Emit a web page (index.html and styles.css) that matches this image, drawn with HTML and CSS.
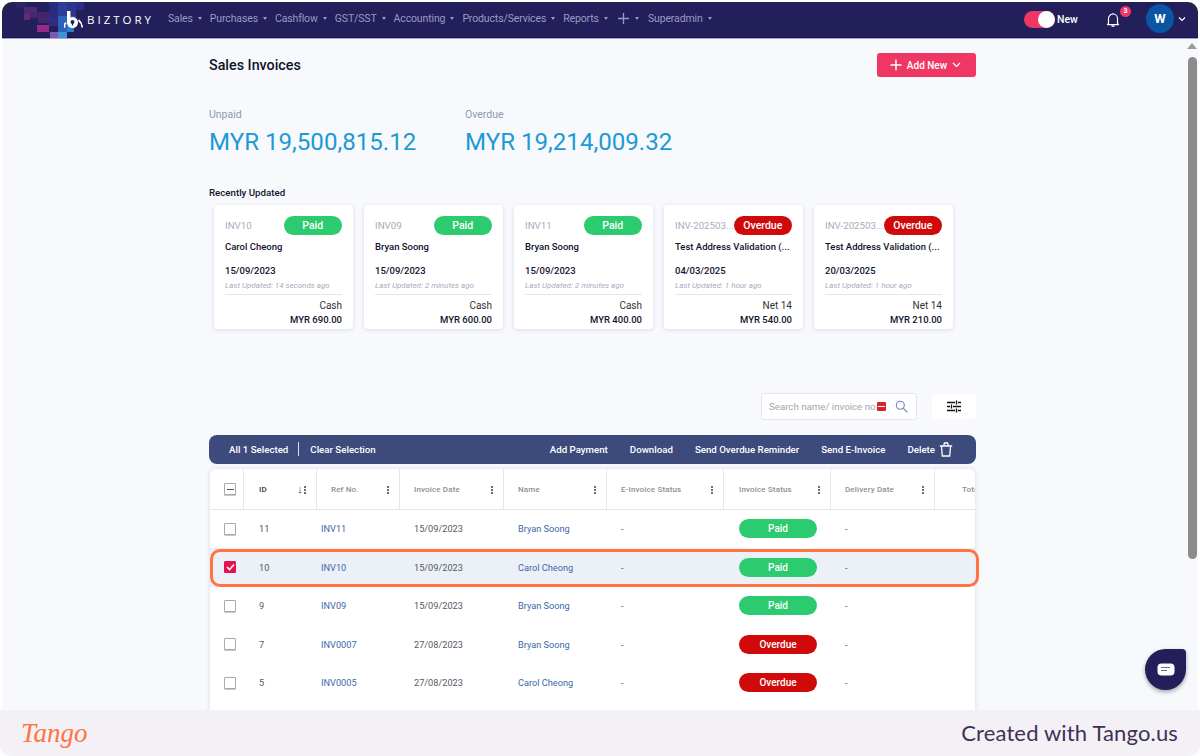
FILE: index.html
```html
<!DOCTYPE html>
<html lang="en">
<head>
<meta charset="utf-8">
<title>Sales Invoices</title>
<link rel="stylesheet" href="styles.css">
</head>
<body>
<div class="frame">
  <div class="shot">
    <header class="nav">
      <svg class="mosaic" width="90" height="36" viewBox="0 0 90 36" aria-hidden="true">
        <rect x="14" y="0" width="10" height="6" fill="#2a2364"/>
        <rect x="22" y="5" width="13" height="7" fill="#4f2a72"/>
        <rect x="22" y="12" width="6" height="6" fill="#632a78"/>
        <rect x="28" y="11" width="8" height="5" fill="#43266c"/>
        <rect x="36" y="10" width="11" height="11" fill="#42256c"/>
        <rect x="35" y="23" width="12" height="7" fill="#962a88"/>
        <rect x="47" y="0" width="9" height="16" fill="#2c2a7c"/>
        <rect x="47" y="16" width="9" height="8" fill="#362a80"/>
        <rect x="47" y="24" width="8" height="6" fill="#231f5a"/>
        <rect x="56" y="0" width="9" height="14" fill="#2b3f98"/>
        <rect x="65" y="0" width="9" height="14" fill="#2c3590"/>
        <rect x="74" y="0" width="8" height="8" fill="#2b2e84"/>
        <rect x="56" y="14" width="9" height="16" fill="#2a62bc"/>
        <rect x="65" y="14" width="9" height="10" fill="#2c52ac"/>
        <rect x="65" y="24" width="7" height="6" fill="#2f7cca"/>
        <rect x="48" y="30" width="8" height="6" fill="#7a58b0"/>
        <rect x="56" y="30" width="9" height="6" fill="#3a94da"/>
      </svg>
      <a class="brand" href="#">
        <svg class="brand-mark" width="19" height="19" viewBox="0 0 19 19" aria-hidden="true">
          <rect x="3" y="1" width="3.500" height="13" fill="#fff"/>
          <circle cx="8.500" cy="12.500" r="5.500" fill="#fff"/>
          <circle cx="8.500" cy="12" r="2" fill="#231f5a"/>
          <rect x="7.900" y="12" width="1.200" height="3.500" fill="#231f5a"/>
          <path d="M2 12.500C.4 14 .2 16 1 17.500M14.500 10c2 1.500 3.400 4 3.800 7.500" stroke="#fff" stroke-width="1.700" fill="none"/>
        </svg>
        <span class="brand-name">BIZTORY</span>
      </a>
      <nav class="menu">
        <a class="menu-item" href="#">Sales<i class="caret"></i></a>
        <a class="menu-item" href="#">Purchases<i class="caret"></i></a>
        <a class="menu-item" href="#">Cashflow<i class="caret"></i></a>
        <a class="menu-item" href="#">GST/SST<i class="caret"></i></a>
        <a class="menu-item" href="#">Accounting<i class="caret"></i></a>
        <a class="menu-item" href="#">Products/Services<i class="caret"></i></a>
        <a class="menu-item" href="#">Reports<i class="caret"></i></a>
        <a class="menu-item menu-plus" href="#">
          <svg width="13" height="13" viewBox="0 0 13 13" aria-hidden="true"><path d="M6.500 1v11M1 6.500h11" stroke="#9a9ac2" stroke-width="1.300"/></svg><i class="caret"></i>
        </a>
        <a class="menu-item" href="#">Superadmin<i class="caret"></i></a>
      </nav>
      <div class="nav-right">
        <span class="toggle"><i class="toggle-knob"></i></span>
        <span class="toggle-label">New</span>
        <span class="bell">
          <svg width="14" height="16" viewBox="0 0 14 16" aria-hidden="true"><path d="M2.500 11.500V6.500a4.500 4.500 0 0 1 9 0v5l1 1.200H1.500zM5.500 14.200h3M7 1v1" fill="none" stroke="#fff" stroke-width="1.200" stroke-linejoin="round"/></svg>
          <b class="bell-badge">3</b>
        </span>
        <span class="avatar">W</span>
        <svg class="avatar-chev" width="8" height="6" viewBox="0 0 8 6" aria-hidden="true"><path d="M1 1.500l3 3 3-3" fill="none" stroke="#fff" stroke-width="1.200"/></svg>
      </div>
    </header>

    <div class="body">
      <main class="content">
        <div class="title-row">
          <h1 class="title">Sales Invoices</h1>
          <button class="add-btn">
            <svg width="12" height="12" viewBox="0 0 12 12" aria-hidden="true"><path d="M6 .5v11M.5 6h11" stroke="#fff" stroke-width="1.400"/></svg>
            <span>Add New</span>
            <svg width="9" height="6" viewBox="0 0 9 6" aria-hidden="true"><path d="M1 1l3.500 3.500L8 1" fill="none" stroke="#fff" stroke-width="1.100"/></svg>
          </button>
        </div>

        <section class="stats">
          <div class="stat"><div class="stat-label">Unpaid</div><div class="stat-value">MYR 19,500,815.12</div></div>
          <div class="stat"><div class="stat-label">Overdue</div><div class="stat-value">MYR 19,214,009.32</div></div>
        </section>

        <h2 class="recent-title">Recently Updated</h2>
        <section class="cards">
          <article class="card">
            <div class="card-top"><span class="card-ref">INV10</span><span class="pill paid card-pill">Paid</span></div>
            <div class="card-name">Carol Cheong</div>
            <div class="card-date">15/09/2023</div>
            <div class="card-updated">Last Updated: 14 seconds ago</div>
            <div class="card-term">Cash</div>
            <div class="card-amount">MYR 690.00</div>
          </article>
          <article class="card">
            <div class="card-top"><span class="card-ref">INV09</span><span class="pill paid card-pill">Paid</span></div>
            <div class="card-name">Bryan Soong</div>
            <div class="card-date">15/09/2023</div>
            <div class="card-updated">Last Updated: 2 minutes ago</div>
            <div class="card-term">Cash</div>
            <div class="card-amount">MYR 600.00</div>
          </article>
          <article class="card">
            <div class="card-top"><span class="card-ref">INV11</span><span class="pill paid card-pill">Paid</span></div>
            <div class="card-name">Bryan Soong</div>
            <div class="card-date">15/09/2023</div>
            <div class="card-updated">Last Updated: 2 minutes ago</div>
            <div class="card-term">Cash</div>
            <div class="card-amount">MYR 400.00</div>
          </article>
          <article class="card">
            <div class="card-top"><span class="card-ref">INV-202503...</span><span class="pill overdue card-pill">Overdue</span></div>
            <div class="card-name">Test Address Validation (...</div>
            <div class="card-date">04/03/2025</div>
            <div class="card-updated">Last Updated: 1 hour ago</div>
            <div class="card-term">Net 14</div>
            <div class="card-amount">MYR 540.00</div>
          </article>
          <article class="card">
            <div class="card-top"><span class="card-ref">INV-202503...</span><span class="pill overdue card-pill">Overdue</span></div>
            <div class="card-name">Test Address Validation (...</div>
            <div class="card-date">20/03/2025</div>
            <div class="card-updated">Last Updated: 1 hour ago</div>
            <div class="card-term">Net 14</div>
            <div class="card-amount">MYR 210.00</div>
          </article>
        </section>

        <div class="tools">
          <div class="search">
            <span class="search-text">Search name/ invoice no.</span>
            <i class="ext-icon"></i>
            <svg width="13" height="13" viewBox="0 0 13 13" aria-hidden="true"><circle cx="5.300" cy="5.300" r="4" fill="none" stroke="#7384b0" stroke-width="1.100"/><path d="M8.300 8.300l4 4" stroke="#7384b0" stroke-width="1.200"/></svg>
          </div>
          <button class="filter-btn" aria-label="Filters">
            <svg width="14" height="13" viewBox="0 0 14 13" aria-hidden="true"><path d="M0 2.500h8M11 2.500h3M9.500 .5v4M0 6.500h3M6 6.500h8M4.500 4.500v4M0 10.500h8M11 10.500h3M9.500 8.500v4" stroke="#111" stroke-width="1.300" fill="none"/></svg>
          </button>
        </div>

        <div class="action-bar">
          <span class="action">All 1 Selected</span>
          <i class="action-sep"></i>
          <span class="action">Clear Selection</span>
          <span class="action action-pay">Add Payment</span>
          <span class="action">Download</span>
          <span class="action">Send Overdue Reminder</span>
          <span class="action">Send E-Invoice</span>
          <span class="action action-del">Delete
            <svg width="14" height="15" viewBox="0 0 14 15" aria-hidden="true"><path d="M2.500 4.500l.8 9.500h7.400l.8-9.500M.8 4h12.400M4.800 3.800l.6-2.800h3.200l.6 2.800" fill="none" stroke="#fff" stroke-width="1.300"/></svg>
          </span>
        </div>

        <div class="table">
          <div class="thead">
            <div class="th th-check"><i class="check check-mixed"></i></div>
            <div class="th th-id"><span class="th-strong">ID</span><span class="sort">↓</span><i class="dots"></i></div>
            <div class="th"><span>Ref No.</span><i class="dots"></i></div>
            <div class="th"><span>Invoice Date</span><i class="dots"></i></div>
            <div class="th"><span>Name</span><i class="dots"></i></div>
            <div class="th"><span>E-Invoice Status</span><i class="dots"></i></div>
            <div class="th th-status"><span>Invoice Status</span><i class="dots"></i></div>
            <div class="th"><span>Delivery Date</span><i class="dots"></i></div>
            <div class="th th-total"><span>Total</span></div>
          </div>
          <div class="tr">
            <div class="td td-check"><i class="check"></i></div><div class="td td-id">11</div><div class="td link td-ref">INV11</div><div class="td">15/09/2023</div><div class="td link">Bryan Soong</div><div class="td">-</div><div class="td td-pill"><span class="pill paid">Paid</span></div><div class="td">-</div><div class="td"></div>
          </div>
          <div class="tr tr-selected">
            <div class="td td-check"><i class="check check-on"><svg width="9" height="8" viewBox="0 0 9 8" aria-hidden="true"><path d="M1 4l2.500 2.500L8 1.500" fill="none" stroke="#fff" stroke-width="1.600"/></svg></i></div><div class="td td-id">10</div><div class="td link td-ref">INV10</div><div class="td">15/09/2023</div><div class="td link">Carol Cheong</div><div class="td">-</div><div class="td td-pill"><span class="pill paid">Paid</span></div><div class="td">-</div><div class="td"></div>
          </div>
          <div class="tr">
            <div class="td td-check"><i class="check"></i></div><div class="td td-id">9</div><div class="td link td-ref">INV09</div><div class="td">15/09/2023</div><div class="td link">Bryan Soong</div><div class="td">-</div><div class="td td-pill"><span class="pill paid">Paid</span></div><div class="td">-</div><div class="td"></div>
          </div>
          <div class="tr">
            <div class="td td-check"><i class="check"></i></div><div class="td td-id">7</div><div class="td link td-ref">INV0007</div><div class="td">27/08/2023</div><div class="td link">Bryan Soong</div><div class="td">-</div><div class="td td-pill"><span class="pill overdue">Overdue</span></div><div class="td">-</div><div class="td"></div>
          </div>
          <div class="tr">
            <div class="td td-check"><i class="check"></i></div><div class="td td-id">5</div><div class="td link td-ref">INV0005</div><div class="td">27/08/2023</div><div class="td link">Carol Cheong</div><div class="td">-</div><div class="td td-pill"><span class="pill overdue">Overdue</span></div><div class="td">-</div><div class="td"></div>
          </div>
        </div>
      </main>

      <div class="scrollbar"><i class="scroll-arrow"></i><i class="scroll-thumb"></i></div>

      <button class="chat" aria-label="Chat">
        <svg width="18" height="13" viewBox="0 0 18 13" aria-hidden="true"><rect x=".5" y=".5" width="17" height="12" rx="4" fill="#fff"/><path d="M4 4.500h9M4 7.500h6" stroke="#6e6c94" stroke-width="1"/></svg>
      </button>
    </div>
  </div>
  <footer class="footer">
    <span class="tango">Tango</span>
    <span class="created">Created with Tango.us</span>
  </footer>
</div>
</body>
</html>
```

FILE: styles.css
```css
* { box-sizing: border-box; }
html, body { margin: 0; height: 100%; background: #fff; overflow: hidden; }
body { font-family: Roboto, "Liberation Sans", sans-serif; color: #222; }
i { display: block; font-style: normal; }
a { text-decoration: none; color: inherit; }
button { font-family: inherit; border: 0; padding: 0; }
h1, h2 { margin: 0; }

.frame { width: 1200px; height: 756px; display: flex; flex-direction: column; }
.shot { flex: 1; min-height: 0; margin: 2px 2px 0; display: flex; flex-direction: column; overflow: hidden; border-radius: 10px 10px 0 0; background: #f8f9fd; }

/* nav */
.nav { position: relative; flex: none; height: 36px; background: #231f5a; border-bottom: 1px solid #14105c; box-shadow: 0 1px 0 #a9a9b8; display: flex; align-items: center; z-index: 2; }
.mosaic { position: absolute; left: 0; top: 0; }
.brand { position: relative; display: flex; align-items: center; margin-left: 62px; width: 104px; }
.brand-mark { margin-right: 4px; margin-top: -1px; }
.brand-name { color: #fff; font-family: "Open Sans", sans-serif; font-size: 11.500px; letter-spacing: 3px; font-weight: 500; }
.menu { display: flex; align-items: center; gap: 8px; margin-top: -2px; }
.menu-item { display: flex; align-items: center; color: #9a9ac2; font-size: 10.500px; letter-spacing: -.13px; }
.caret { width: 0; height: 0; margin-left: 5px; border: 2.500px solid transparent; border-top: 3px solid #9a9ac2; border-bottom: 0; }
.menu-plus { margin-left: 1px; margin-right: 1px; }
.nav-right { margin-left: auto; display: flex; align-items: center; }
.toggle { width: 31px; height: 17px; border-radius: 9px; background: #ef3766; position: relative; display: block; }
.toggle-knob { position: absolute; right: 0; top: 0; width: 17px; height: 17px; border-radius: 50%; background: #fff; }
.toggle-label { color: #fff; font-size: 10.500px; font-weight: 500; margin-left: 2px; width: 28px; }
.bell { position: relative; display: block; margin-left: 21px; height: 16px; }
.bell-badge { position: absolute; left: 14px; top: -6px; width: 11px; height: 11px; border-radius: 50%; background: #ef3766; color: #fff; font-size: 7px; line-height: 11px; text-align: center; font-weight: 700; }
.avatar { width: 28px; height: 29px; margin: -3px 0 0 26px; border-radius: 50%; background: #0b55a5; color: #fff; font-weight: 700; font-size: 13px; line-height: 29px; text-align: center; }
.avatar-chev { margin: -2px 12px 0 4px; }

/* body */
.body { flex: 1; min-height: 0; display: flex; position: relative; }
.content { flex: 1; min-width: 0; padding: 15px 210px 0 207px; }
.scrollbar { flex: none; width: 12px; background: #f8f9fd; padding-top: 5px; display: flex; flex-direction: column; align-items: center; }
.scroll-arrow { width: 0; height: 0; border: 5px solid transparent; border-top: 0; border-bottom: 6px solid #9b9b9b; }
.scroll-thumb { width: 9px; height: 502px; margin-top: 8px; background: #8c8c8c; border-radius: 5px; }
.chat { position: absolute; right: 12px; bottom: 20px; width: 41px; height: 41px; background: #231f5a; border-radius: 50% 4px 50% 50%; box-shadow: 0 2px 4px rgba(0,0,0,.35); display: flex; align-items: center; justify-content: center; }

/* title */
.title-row { display: flex; justify-content: space-between; align-items: center; height: 24px; }
.title { font-size: 14.300px; font-weight: 500; color: #10132d; }
.add-btn { width: 99px; height: 24px; padding-right: 2px; background: #ef3766; border-radius: 3px; color: #fff; font-size: 10px; font-weight: 500; display: flex; align-items: center; justify-content: center; gap: 5px; }

/* stats */
.stats { display: flex; margin-top: 31px; }
.stat { width: 256px; }
.stat-label { font-size: 10.500px; line-height: 14px; color: #8a9bb0; }
.stat-value { font-size: 24.100px; line-height: 30px; margin-top: 5px; color: #1c9ad6; }

/* recent */
.recent-title { font-size: 9.700px; line-height: 14px; font-weight: 500; color: #10132d; margin-top: 28.500px; }
.cards { display: flex; gap: 11px; margin: 5.500px 0 0 5px; }
.card { width: 139px; height: 124px; background: #fff; border-radius: 4px; box-shadow: 0 1px 4px rgba(60,70,110,.16); padding: 11px 11px 0; font-size: 9.500px; }
.card-top { display: flex; justify-content: space-between; align-items: center; height: 19px; }
.card-ref { font-size: 9.700px; color: #a6acbc; white-space: nowrap; }
.pill { display: inline-block; border-radius: 10px; color: #fff; font-weight: 500; text-align: center; }
.card-pill { width: 58.500px; flex: none; height: 19px; line-height: 19px; font-size: 10.500px; }
.paid { background: #2ccb70; }
.overdue { background: #d00a0a; }
.card-name { font-weight: 500; color: #10132d; margin-top: 5px; line-height: 14px; white-space: nowrap; }
.card-date { font-weight: 500; color: #10132d; margin-top: 9.500px; line-height: 14px; }
.card-updated { font-size: 8px; font-style: italic; color: #a6acbc; line-height: 11px; margin-top: 2.500px; padding-bottom: 3px; border-bottom: 1px solid #e4e6ee; }
.card-term { text-align: right; color: #333; line-height: 14px; margin-top: 3.500px; font-size: 10px; }
.card-amount { text-align: right; font-weight: 500; color: #10132d; line-height: 14px; }

/* tools */
.tools { display: flex; justify-content: flex-end; align-items: center; margin-top: 63px; height: 28px; }
.search { width: 156px; height: 27px; background: #fff; border: 1px solid #e4e6ee; border-radius: 3px; display: flex; align-items: center; padding-left: 7px; font-size: 9.700px; color: #a3a6ad; }
.search-text { white-space: nowrap; overflow: hidden; width: 108px; }
.ext-icon { width: 9px; height: 9px; background: #d3262a; border-radius: 1px; position: relative; margin-right: 9px; flex: none; }
.ext-icon::after { content: ""; display: block; position: absolute; left: 1px; right: 1px; top: 4px; height: 1px; background: #fff; }
.filter-btn { width: 44px; height: 25px; margin-left: 15px; background: #fff; border-radius: 2px; display: flex; align-items: center; justify-content: center; }

/* action bar */
.action-bar { margin-top: 15px; height: 29px; padding: 0 0 1px 20px; border-radius: 8px; background: #3d4a7c; display: flex; align-items: center; color: #fff; font-size: 9.700px; font-weight: 500; }
.action { white-space: nowrap; display: flex; align-items: center; }
.action-sep { width: 1px; height: 14px; background: #dfe2ee; margin: 0 11px 0 10px; }
.action-pay { margin-left: auto; }
.action-bar .action-pay ~ .action { margin-left: 22px; }
.action-bar .action-del { margin-right: 23px; margin-left: 22px; }
.action-del svg { margin-left: 4px; }

/* table */
.table { position: relative; margin-top: 5px; width: 765px; margin-left: 1px; background: #fff; border-radius: 6px 6px 0 0; box-shadow: 0 0 5px rgba(60,70,110,.16); height: 300px; }
.thead, .tr { display: grid; grid-template-columns: 34px 73px 83px 104px 103px 117px 107px 104px 40px; }
.thead { height: 40.500px; border-bottom: 1px solid #e4e5ea; overflow: hidden; border-radius: 6px 6px 0 0; }
.th { display: flex; align-items: center; position: relative; padding: 1px 0 0 14px; border-right: 1px solid #e4e5ea; font-size: 8px; font-weight: 500; letter-spacing: .15px; color: #8c8f99; white-space: nowrap; }
.th-total { border-right: 0; padding-left: 27px; }
.th-status { padding-left: 15px; }
.th-id { padding-left: 15px; }
.th-strong { color: #3a3d4a; }
.sort { margin-left: auto; margin-right: 13px; font-size: 11px; line-height: 11px; color: #444; }
.dots { position: absolute; right: 10px; top: 17px; width: 2px; height: 2px; border-radius: 50%; background: #3a3d55; box-shadow: 0 3px 0 #3a3d55, 0 6px 0 #3a3d55; }
.tr { height: 38.500px; }
.td { display: flex; align-items: center; padding-left: 14px; font-size: 9.200px; color: #555962; white-space: nowrap; }
.td-id { padding-left: 15px; }
.td-ref { padding-left: 4px; }
.td-pill { padding-left: 15px; }
.link { color: #3a6aa8; }
.tr .pill { width: 78px; height: 19px; line-height: 19px; font-size: 10px; }
.tr-selected { position: relative; background: #ecf0f7; }
.tr-selected::after { content: ""; box-sizing: border-box; position: absolute; left: 0; top: 1px; width: 769px; height: 38px; border: 3px solid #ff7442; border-radius: 10px; }
.check { width: 12px; height: 12px; background: #fff; border: 1px solid #a9a9a9; border-radius: 1px; box-shadow: 0 1px 0 #c8c8c8; position: relative; display: flex; align-items: center; justify-content: center; }
.check-mixed::after { content: ""; width: 7px; height: 1px; background: #555; }
.check-on { background: #e8104f; border-color: #e8104f; box-shadow: none; }

/* footer */
.footer { flex: none; height: 46px; padding: 0 22px 2px 21px; background: #f3f1f6; border-radius: 0 0 10px 10px; display: flex; align-items: center; justify-content: space-between; }
.tango { font-family: "Liberation Serif", serif; font-style: italic; font-size: 27px; margin-top: 2px; color: #ff7442; }
.created { font-family: Lato, sans-serif; font-size: 22px; letter-spacing: .15px; color: #3f3058; }
```
